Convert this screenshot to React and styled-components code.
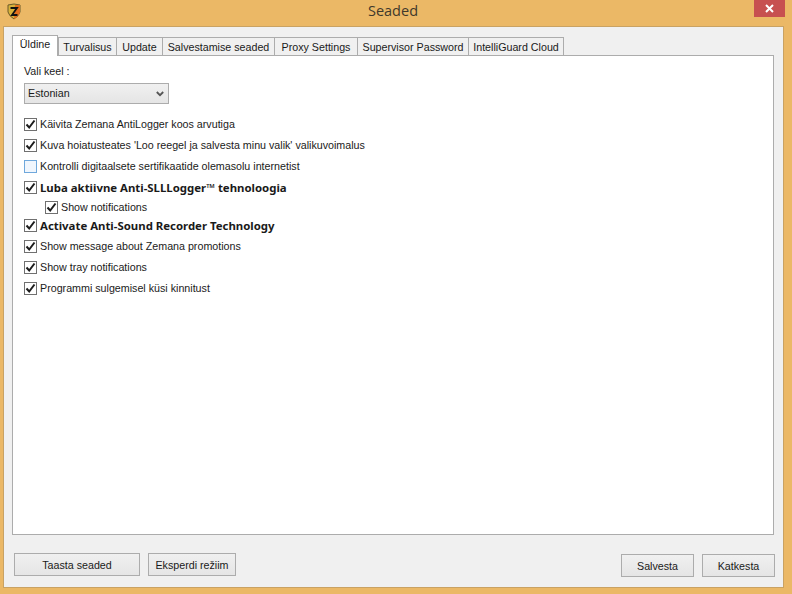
import styled, { createGlobalStyle } from "styled-components";

const GlobalStyle = createGlobalStyle`
  html, body {
    margin: 0;
    padding: 0;
    background: #ebb866;
  }
  * {
    box-sizing: border-box;
  }
`;

const Frame = styled.div`
  width: 792px;
  height: 594px;
  display: flex;
  flex-direction: column;
  background: #ebb866;
  font-family: "Liberation Sans", Arial, sans-serif;
  font-size: 10.7px;
  color: #1a1a1a;
  overflow: hidden;
`;

const TitleBar = styled.header`
  height: 26px;
  flex: none;
  position: relative;
  display: flex;
  justify-content: center;
`;

const Title = styled.h1`
  margin: 1px 0 0 -6px;
  font-family: "Open Sans", sans-serif;
  font-weight: 400;
  font-size: 14.5px;
  line-height: 20px;
  color: #40392c;
`;

const AppIcon = styled.svg`
  position: absolute;
  left: 6px;
  top: 3px;
`;

const CloseButton = styled.div`
  position: absolute;
  left: 754px;
  top: 0;
  width: 31px;
  height: 17px;
  background: #c75050;
  display: flex;
  align-items: center;
  justify-content: center;
`;

const Client = styled.main`
  width: 781px;
  height: 562px;
  margin-left: 3px;
  background: #f0f0f0;
  border: 1px solid #c9a263;
  display: flex;
  flex-direction: column;
  padding: 8px 8px 0 8px;
`;

const TabBar = styled.div`
  display: flex;
  align-items: flex-end;
  height: 20px;
  position: relative;
  z-index: 1;
`;

const Tab = styled.div`
  width: ${(p) => p.$width}px;
  height: ${(p) => (p.$active ? "21px" : "19px")};
  margin-bottom: -1px;
  margin-right: ${(p) => (p.$active ? "0" : "-1px")};
  padding-top: ${(p) => (p.$active ? "1px" : "2px")};
  background: ${(p) => (p.$active ? "#ffffff" : "#f0f0f0")};
  border: 1px solid #acacac;
  border-bottom: ${(p) => (p.$active ? "none" : "1px solid #acacac")};
  line-height: 15px;
  text-align: center;
  white-space: nowrap;
`;

const Panel = styled.section`
  width: 762px;
  height: 480px;
  background: #ffffff;
  border: 1px solid #acacac;
  padding: 8px 11px;
  display: flex;
  flex-direction: column;
`;

const FieldLabel = styled.div`
  line-height: 15px;
  height: 15px;
`;

const SelectBox = styled.div`
  width: 145px;
  height: 21px;
  margin-top: 4px;
  margin-bottom: 10px;
  padding: 0 4px 0 3px;
  border: 1px solid #acacac;
  background: linear-gradient(#f0f0f0, #e5e5e5);
  display: flex;
  align-items: center;
  justify-content: space-between;
  line-height: 15px;
`;

const OptionList = styled.div`
  display: flex;
  flex-direction: column;
`;

const Option = styled.label`
  display: flex;
  align-items: center;
  gap: 3px;
  height: ${(p) => p.$height || 21}px;
  padding-left: ${(p) => (p.$nested ? "21px" : "0")};
  padding-bottom: ${(p) => p.$after || 0}px;
  font-family: ${(p) => (p.$bold ? '"Noto Sans", sans-serif' : "inherit")};
  font-size: ${(p) => (p.$bold ? "11.4px" : "inherit")};
  font-weight: ${(p) => (p.$bold ? 700 : 400)};
  line-height: 15px;
  white-space: nowrap;
`;

const Box = styled.span`
  width: 13px;
  height: 13px;
  flex: none;
  display: flex;
  align-items: center;
  justify-content: center;
  border: 1px solid ${(p) => (p.$checked ? "#707070" : "#6fa8dc")};
  background: ${(p) => (p.$checked ? "#ffffff" : "#f0f6fd")};
`;

const Footer = styled.footer`
  display: flex;
  justify-content: space-between;
  padding: 18px 0 0 2px;
`;

const ButtonGroup = styled.div`
  display: flex;
  gap: 8px;
  margin-top: ${(p) => p.$offset || 0}px;
`;

const Button = styled.button`
  width: ${(p) => p.$width}px;
  height: 23px;
  padding: 0;
  font: inherit;
  color: inherit;
  border: 1px solid #acacac;
  background: linear-gradient(#f0f0f0, #e5e5e5);
`;

const CheckMark = () => (
  <svg width="11" height="11" viewBox="0 0 11 11">
    <path d="M1.5 5.5 L4.2 8.5 L9.5 1.5" fill="none" stroke="#1c1c1c" strokeWidth="2" />
  </svg>
);

const options = [
  { text: "Käivita Zemana AntiLogger koos arvutiga", checked: true },
  { text: "Kuva hoiatusteates 'Loo reegel ja salvesta minu valik' valikuvoimalus", checked: true },
  { text: "Kontrolli digitaalsete sertifikaatide olemasolu internetist", checked: false },
  { text: "Luba aktiivne Anti-SLLLogger™ tehnoloogia", checked: true, bold: true, height: 20 },
  { text: "Show notifications", checked: true, nested: true, height: 20 },
  { text: "Activate Anti-Sound Recorder Technology", checked: true, bold: true, height: 19, after: 2 },
  { text: "Show message about Zemana promotions", checked: true },
  { text: "Show tray notifications", checked: true },
  { text: "Programmi sulgemisel küsi kinnitust", checked: true },
];

const tabs = [
  { label: "Üldine", width: 46 },
  { label: "Turvalisus", width: 59 },
  { label: "Update", width: 47 },
  { label: "Salvestamise seaded", width: 113 },
  { label: "Proxy Settings", width: 84 },
  { label: "Supervisor Password", width: 112 },
  { label: "IntelliGuard Cloud", width: 96 },
];

const App = () => {
  return (
    <Frame>
      <GlobalStyle />
      <TitleBar>
        <AppIcon width="16" height="17" viewBox="0 0 16 17">
          <path d="M2 2 L8 1 L14 2 L14 9 Q13 13 8 16 Q3 13 2 9 Z" fill="#d8b23a" stroke="#6b5a2a" strokeWidth="1" />
          <path d="M9 2 L14 2 L14 9 Q13 13 8 16 Z" fill="#e2701e" />
          <path d="M4.5 5 L11 5 L6 12 L11.5 12" fill="none" stroke="#111111" strokeWidth="1.8" />
        </AppIcon>
        <Title>Seaded</Title>
        <CloseButton>
          <svg width="9" height="9" viewBox="0 0 9 9">
            <path d="M1 1 L8 8 M8 1 L1 8" stroke="#ffffff" strokeWidth="2" />
          </svg>
        </CloseButton>
      </TitleBar>
      <Client>
        <TabBar>
          {tabs.map((tab, i) => (
            <Tab key={tab.label} $active={i === 0} $width={tab.width}>
              {tab.label}
            </Tab>
          ))}
        </TabBar>
        <Panel>
          <FieldLabel>Vali keel :</FieldLabel>
          <SelectBox>
            <span>Estonian</span>
            <svg width="8" height="6" viewBox="0 0 8 6">
              <path d="M0.8 1 L4 4.2 L7.2 1" fill="none" stroke="#555555" strokeWidth="1.8" />
            </svg>
          </SelectBox>
          <OptionList>
            {options.map((o) => (
              <Option key={o.text} $bold={o.bold} $nested={o.nested} $height={o.height} $after={o.after}>
                <Box $checked={o.checked}>{o.checked && <CheckMark />}</Box>
                {o.text}
              </Option>
            ))}
          </OptionList>
        </Panel>
        <Footer>
          <ButtonGroup>
            <Button $width={126}>Taasta seaded</Button>
            <Button $width={88}>Eksperdi režiim</Button>
          </ButtonGroup>
          <ButtonGroup $offset={1}>
            <Button $width={73}>Salvesta</Button>
            <Button $width={73}>Katkesta</Button>
          </ButtonGroup>
        </Footer>
      </Client>
    </Frame>
  );
};

export default App;
